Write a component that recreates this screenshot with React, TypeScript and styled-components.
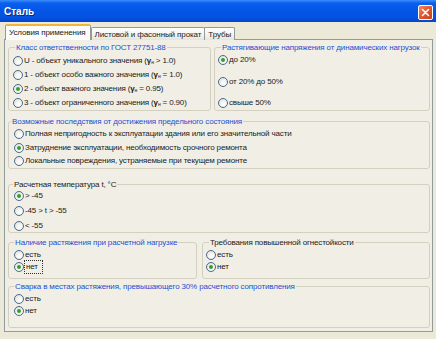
import React from "react";
import styled, { createGlobalStyle, css } from "styled-components";

const Global = createGlobalStyle`
  html, body { margin: 0; padding: 0; background: #ECE9D8; }
  body { font-family: "Liberation Sans", Arial, sans-serif; }
`;

const Window = styled.div`
  width: 436px;
  height: 339px;
  background: #ECE9D8;
  display: flex;
  flex-direction: column;
  overflow: hidden;
  font-family: "Liberation Sans", Arial, sans-serif;
  font-size: 8px;
  letter-spacing: -0.15px;
  color: #1a1a1a;
`;

const TitleBar = styled.div`
  height: 22px;
  flex: none;
  display: flex;
  align-items: center;
  justify-content: space-between;
  padding: 0 3px 0 4px;
  background: linear-gradient(180deg, #3d8dfb 0%, #0a5fef 14%, #0456e6 45%, #0552e0 80%, #0446cd 100%);
`;

const Title = styled.span`
  color: #fff;
  font-weight: bold;
  font-size: 10px;
  letter-spacing: 0;
  text-shadow: 1px 1px 0 #0a2a80;
`;

const CloseBtn = styled.div`
  width: 13px;
  height: 13px;
  margin-top: 3px;
  border: 1px solid #fff;
  border-radius: 2px;
  background: linear-gradient(135deg, #f08a6a 0%, #e25a2c 45%, #c8401a 100%);
  display: flex;
  align-items: center;
  justify-content: center;
`;

const Body = styled.div`
  flex: 1;
  padding: 3px 3px 0 4px;
  display: flex;
  flex-direction: column;
`;

const TabStrip = styled.div`
  height: 15px;
  display: flex;
  align-items: flex-end;
  padding-left: 1px;
  position: relative;
  z-index: 1;
  margin-bottom: -1px;
`;

const Tab = styled.div<{ $active?: boolean }>`
  height: 13px;
  box-sizing: border-box;
  padding: 0 3px;
  display: flex;
  align-items: center;
  border: 1px solid #919b9c;
  border-bottom: none;
  border-radius: 2px 2px 0 0;
  background: linear-gradient(180deg, #ffffff 0%, #f3f2ec 60%, #e6e4dc 100%);
  margin-right: -1px;
  white-space: nowrap;
  letter-spacing: -0.1px;
  ${(p) =>
    p.$active &&
    css`
      height: 16px;
      background: #fcfcfa;
      border-top: 2px solid #f5b33a;
      padding: 0 4px 1px 3px;
      position: relative;
      z-index: 2;
      margin-right: 0;
    `}
`;

const TabPage = styled.div`
  height: 293px;
  box-sizing: border-box;
  border: 1px solid #919b9c;
  background: #f1efe5;
  padding: 2px 2px 3px 3px;
  display: flex;
  flex-direction: column;
`;

const Row = styled.div<{ $gap: number }>`
  display: flex;
  gap: ${(p) => p.$gap}px;
`;

const Group = styled.fieldset<{ $h: number; $w?: number; $mt?: number }>`
  margin: ${(p) => p.$mt ?? 0}px 0 0 0;
  padding: 0;
  box-sizing: border-box;
  height: ${(p) => p.$h}px;
  ${(p) => (p.$w ? `width: ${p.$w}px; flex: none;` : "flex: 1;")}
  min-width: 0;
  border: 1px solid #d3d0bf;
  border-radius: 3px;
`;

const Legend = styled.legend<{ $blue?: boolean; $lx: number }>`
  padding: 0 1px;
  margin-left: ${(p) => p.$lx}px;
  line-height: 11px;
  height: 11px;
  color: ${(p) => (p.$blue ? "#1d4fd0" : "#1a1a1a")};
  white-space: nowrap;
`;

const Items = styled.div<{ $pt: number; $gap: number; $pl: number }>`
  display: flex;
  flex-direction: column;
  padding: ${(p) => p.$pt}px 0 0 ${(p) => p.$pl}px;
  gap: ${(p) => p.$gap}px;
`;

const Option = styled.div<{ $h: number }>`
  height: ${(p) => p.$h}px;
  display: flex;
  align-items: center;
  gap: 1px;
  white-space: nowrap;
`;

const Circle = styled.span<{ $on?: boolean }>`
  width: 10px;
  height: 10px;
  box-sizing: border-box;
  flex: none;
  border-radius: 50%;
  border: 1px solid #4a6a92;
  background: radial-gradient(circle at 60% 65%, #ffffff 0%, #f4f4f0 40%, #d8d8cf 100%);
  display: flex;
  align-items: center;
  justify-content: center;
  &::after {
    content: "";
    display: ${(p) => (p.$on ? "block" : "none")};
    width: 4px;
    height: 4px;
    border-radius: 50%;
    background: #2ea12e;
  }
`;

const Label = styled.span<{ $focus?: boolean }>`
  line-height: 10px;
  ${(p) =>
    p.$focus &&
    css`
      outline: 1px dotted #333;
      padding: 1px 4px 1px 1px;
    `}
`;

const Sub = styled.sub`
  font-size: 5px;
  vertical-align: -1px;
`;

const Gamma = styled.b`
  font-weight: bold;
`;

type Opt = { text: React.ReactNode; on?: boolean; focus?: boolean };

function Options({ opts, h, pt, gap, pl }: { opts: Opt[]; h: number; pt: number; gap: number; pl: number }) {
  return (
    <Items $pt={pt} $gap={gap} $pl={pl}>
      {opts.map((o, i) => (
        <Option key={i} $h={h}>
          <Circle $on={o.on} />
          <Label $focus={o.focus}>{o.text}</Label>
        </Option>
      ))}
    </Items>
  );
}

const gamma = (
  <>
    <Gamma>γ</Gamma>
    <Sub>н</Sub>
  </>
);

export default function App() {
  return (
    <>
      <Global />
      <Window>
        <TitleBar>
          <Title>Сталь</Title>
          <CloseBtn>
            <svg width="9" height="9" viewBox="0 0 9 9">
              <path d="M1.5 1.5 L7.5 7.5 M7.5 1.5 L1.5 7.5" stroke="#fff" strokeWidth="1.6" strokeLinecap="round" />
            </svg>
          </CloseBtn>
        </TitleBar>
        <Body>
          <TabStrip>
            <Tab $active>Условия применения</Tab>
            <Tab>Листовой и фасонный прокат</Tab>
            <Tab>Трубы</Tab>
          </TabStrip>
          <TabPage>
            <Row $gap={3}>
              <Group $h={69} $w={203}>
                <Legend $blue $lx={6}>Класс ответственности по ГОСТ 27751-88</Legend>
                <Options
                  h={14}
                  pt={1}
                  gap={0}
                  pl={4}
                  opts={[
                    { text: <>U - объект уникального значения ({gamma} &gt; 1.0)</> },
                    { text: <>1 - объект особо важного значения ({gamma} = 1.0)</> },
                    { text: <>2 - объект важного значения ({gamma} = 0.95)</>, on: true },
                    { text: <>3 - объект ограниченного значения ({gamma} = 0.90)</> },
                  ]}
                />
              </Group>
              <Group $h={69}>
                <Legend $blue $lx={6}>Растягивающие напряжения от динамических нагрузок</Legend>
                <Options
                  h={14}
                  pt={0}
                  gap={7.5}
                  pl={3}
                  opts={[{ text: "до 20%", on: true }, { text: "от 20% до 50%" }, { text: "свыше 50%" }]}
                />
              </Group>
            </Row>
            <Group $h={53} $mt={5}>
              <Legend $blue $lx={2}>Возможные последствия от достижения предельного состояния</Legend>
              <Options
                h={13}
                pt={0.5}
                gap={0.5}
                pl={5}
                opts={[
                  { text: "Полная непригодность к эксплуатации здания или его значительной части" },
                  { text: "Затруднение эксплуатации, необходимость срочного ремонта", on: true },
                  { text: "Локальные повреждения, устраняемые при текущем ремонте" },
                ]}
              />
            </Group>
            <Group $h={61} $mt={10}>
              <Legend $lx={4}>Расчетная температура t, °C</Legend>
              <Options
                h={12}
                pt={0}
                gap={3}
                pl={5}
                opts={[{ text: "> -45", on: true }, { text: "-45 > t > -55" }, { text: "< -55" }]}
              />
            </Group>
            <Row $gap={5}>
              <Group $h={42} $w={189} $mt={4}>
                <Legend $blue $lx={5}>Наличие растяжения при расчетной нагрузке</Legend>
                <Options h={12} pt={1} gap={0} pl={5} opts={[{ text: "есть" }, { text: "нет", on: true, focus: true }]} />
              </Group>
              <Group $h={42} $mt={4}>
                <Legend $lx={6}>Требования повышенной огнестойкости</Legend>
                <Options h={12} pt={1} gap={0} pl={3} opts={[{ text: "есть" }, { text: "нет", on: true }]} />
              </Group>
            </Row>
            <Group $h={40} $mt={2}>
              <Legend $blue $lx={5}>Сварка в местах растяжения, превышающего 30% расчетного сопротивления</Legend>
              <Options h={12} pt={1} gap={0} pl={5} opts={[{ text: "есть" }, { text: "нет", on: true }]} />
            </Group>
          </TabPage>
        </Body>
      </Window>
    </>
  );
}
